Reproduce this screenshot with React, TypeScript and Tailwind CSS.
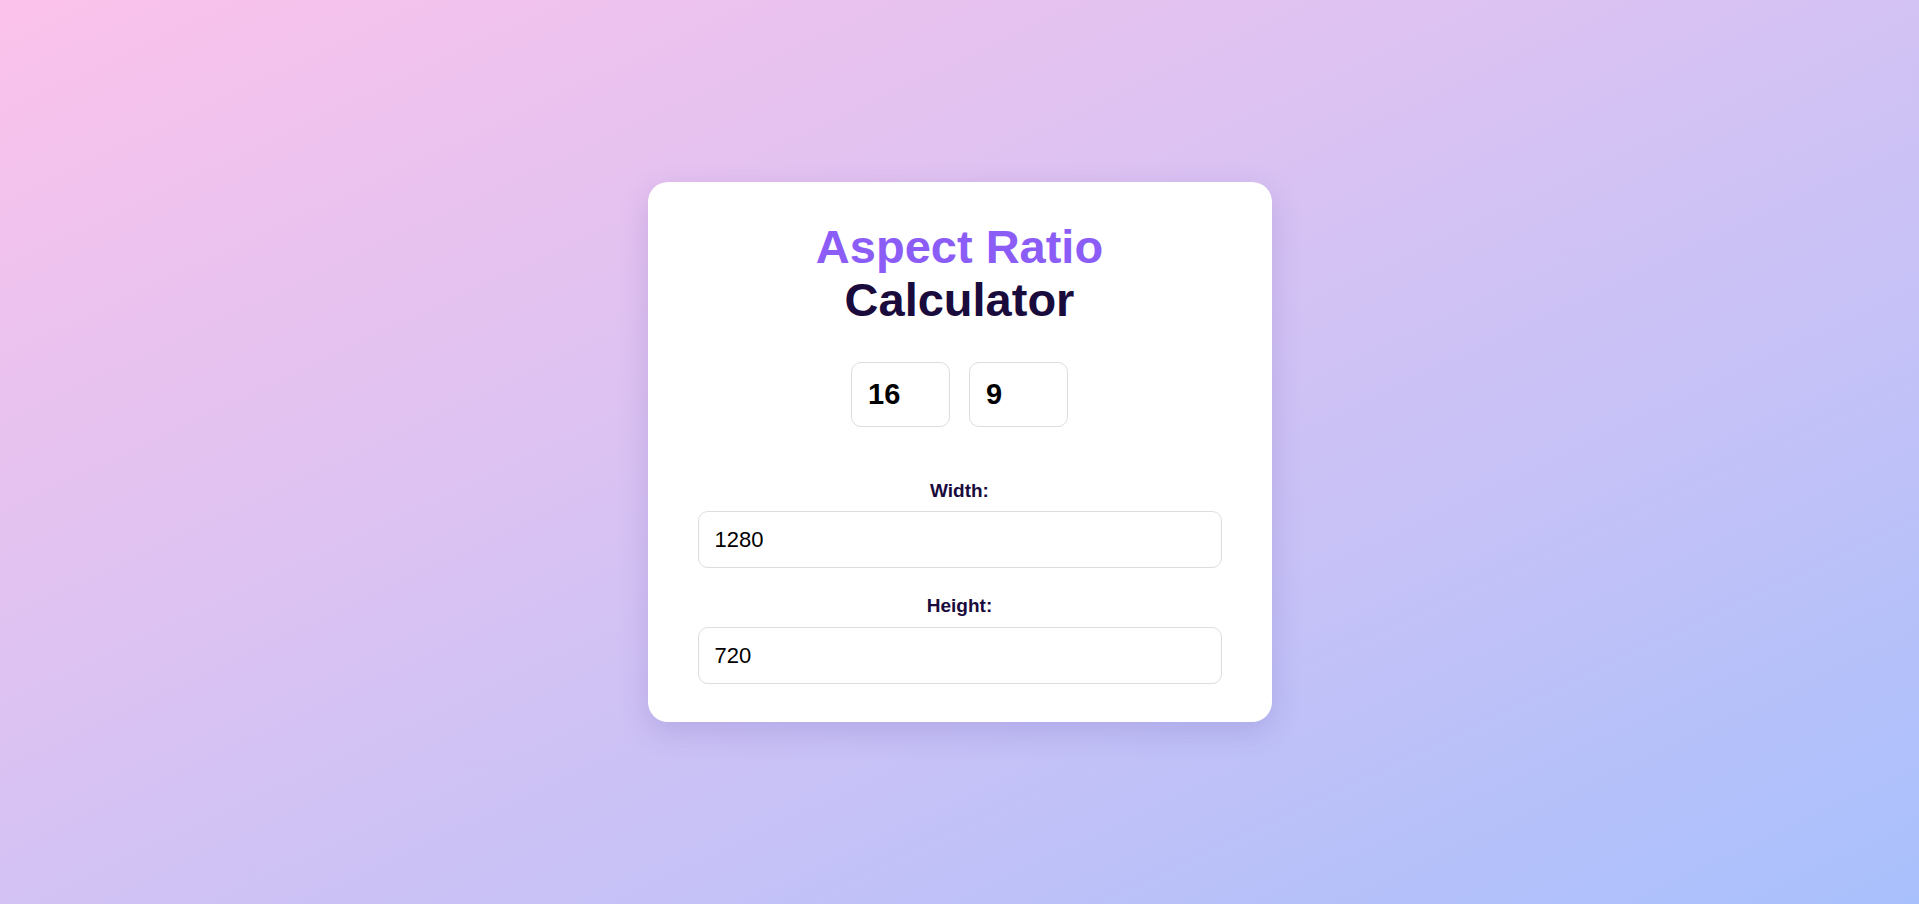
import React, { useState } from "react";

export default function App() {
  const [a, setA] = useState("16");
  const [b, setB] = useState("9");
  const [w, setW] = useState("1280");
  const [h, setH] = useState("720");

  const font = { fontFamily: '"Liberation Sans", Arial, sans-serif' };

  return (
    <div
      className="min-h-screen w-full flex items-center justify-center bg-gradient-to-br from-[#fbc2eb] to-[#a8c0fc]"
      style={font}
    >
      <div className="w-[624px] bg-white rounded-[20px] pt-[38px] pb-[38px] px-[50px] shadow-[0_10px_30px_rgba(80,60,160,0.18)] flex flex-col items-center">
        <h1 className="text-[47px] font-bold leading-[53px] text-center">
          <span className="block text-[#8b5cf6]">Aspect Ratio</span>
          <span className="block text-[#1a0b3d]">Calculator</span>
        </h1>

        <div className="flex gap-[19px] mt-[36px]">
          <input
            value={a}
            onChange={(e) => setA(e.target.value)}
            className="w-[99px] h-[65px] border border-[#dddddd] rounded-[10px] pl-[16px] text-[29px] font-bold text-black outline-none"
            style={font}
          />
          <input
            value={b}
            onChange={(e) => setB(e.target.value)}
            className="w-[99px] h-[65px] border border-[#dddddd] rounded-[10px] pl-[16px] text-[29px] font-bold text-black outline-none"
            style={font}
          />
        </div>

        <div className="w-full flex flex-col items-center mt-[53px]">
          <label className="text-[19px] font-bold text-[#1a0b3d] leading-[21px]">Width:</label>
          <input
            value={w}
            onChange={(e) => setW(e.target.value)}
            className="mt-[10px] w-full h-[57px] border border-[#dddddd] rounded-[10px] px-[16px] text-[22px] text-black outline-none"
            style={font}
          />
        </div>

        <div className="w-full flex flex-col items-center mt-[27px]">
          <label className="text-[19px] font-bold text-[#1a0b3d] leading-[21px]">Height:</label>
          <input
            value={h}
            onChange={(e) => setH(e.target.value)}
            className="mt-[11px] w-full h-[57px] border border-[#dddddd] rounded-[10px] px-[16px] text-[22px] text-black outline-none"
            style={font}
          />
        </div>
      </div>
    </div>
  );
}
